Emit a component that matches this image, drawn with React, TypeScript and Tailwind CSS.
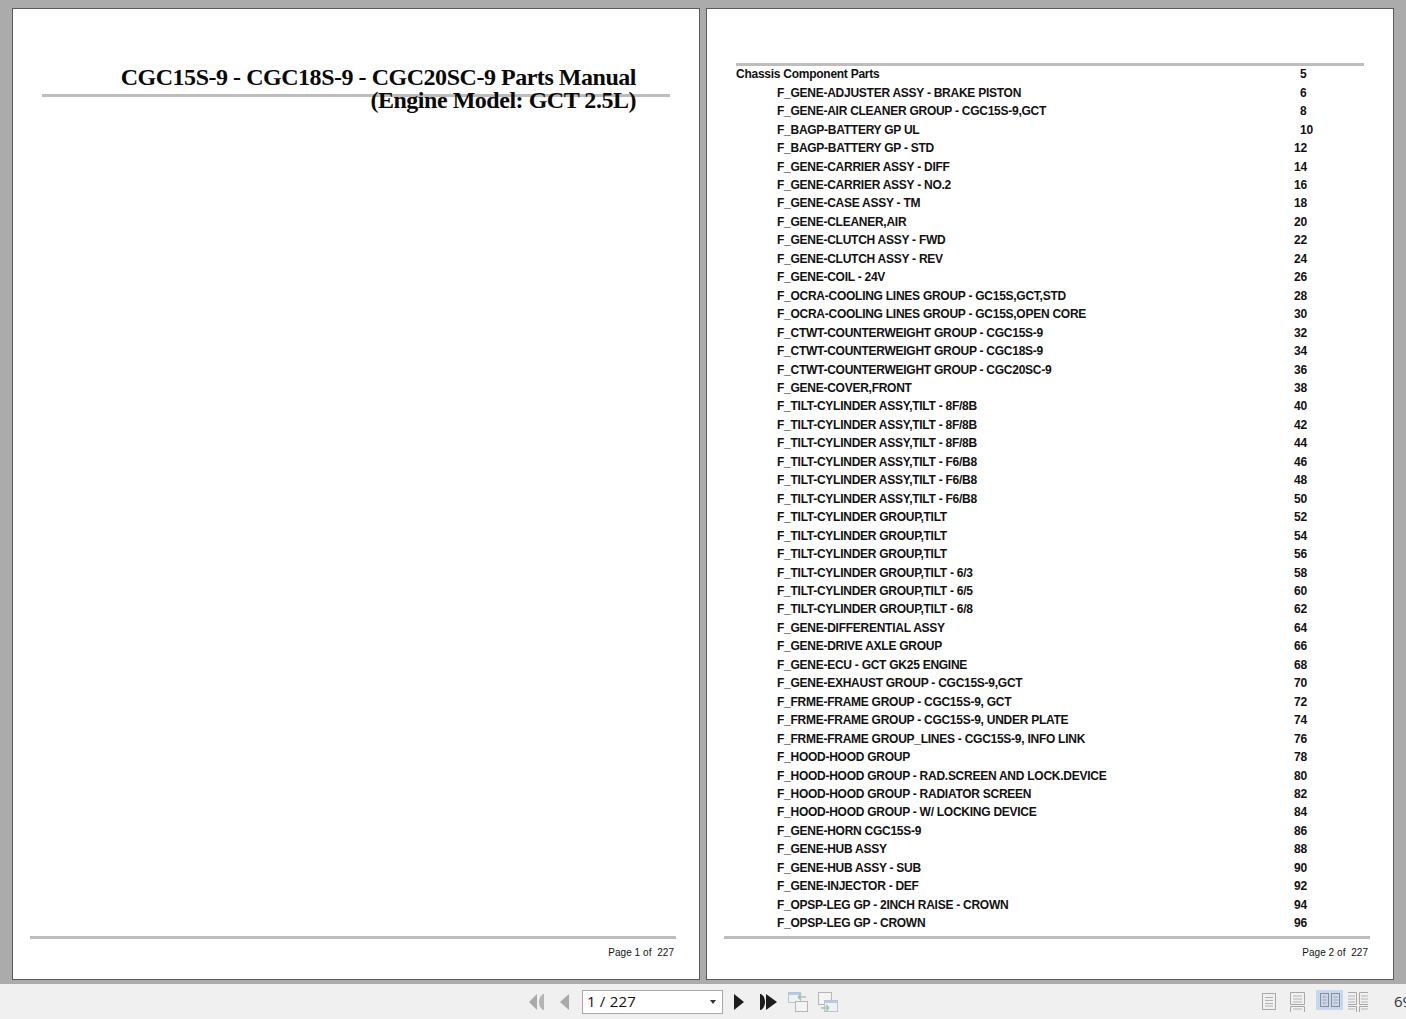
const rows: [string, string][] = [
  ["F_GENE-ADJUSTER ASSY - BRAKE PISTON", "6"],
  ["F_GENE-AIR CLEANER GROUP - CGC15S-9,GCT", "8"],
  ["F_BAGP-BATTERY GP UL", "10"],
  ["F_BAGP-BATTERY GP - STD", "12"],
  ["F_GENE-CARRIER ASSY - DIFF", "14"],
  ["F_GENE-CARRIER ASSY - NO.2", "16"],
  ["F_GENE-CASE ASSY - TM", "18"],
  ["F_GENE-CLEANER,AIR", "20"],
  ["F_GENE-CLUTCH ASSY - FWD", "22"],
  ["F_GENE-CLUTCH ASSY - REV", "24"],
  ["F_GENE-COIL - 24V", "26"],
  ["F_OCRA-COOLING LINES GROUP - GC15S,GCT,STD", "28"],
  ["F_OCRA-COOLING LINES GROUP - GC15S,OPEN CORE", "30"],
  ["F_CTWT-COUNTERWEIGHT GROUP - CGC15S-9", "32"],
  ["F_CTWT-COUNTERWEIGHT GROUP - CGC18S-9", "34"],
  ["F_CTWT-COUNTERWEIGHT GROUP - CGC20SC-9", "36"],
  ["F_GENE-COVER,FRONT", "38"],
  ["F_TILT-CYLINDER ASSY,TILT - 8F/8B", "40"],
  ["F_TILT-CYLINDER ASSY,TILT - 8F/8B", "42"],
  ["F_TILT-CYLINDER ASSY,TILT - 8F/8B", "44"],
  ["F_TILT-CYLINDER ASSY,TILT - F6/B8", "46"],
  ["F_TILT-CYLINDER ASSY,TILT - F6/B8", "48"],
  ["F_TILT-CYLINDER ASSY,TILT - F6/B8", "50"],
  ["F_TILT-CYLINDER GROUP,TILT", "52"],
  ["F_TILT-CYLINDER GROUP,TILT", "54"],
  ["F_TILT-CYLINDER GROUP,TILT", "56"],
  ["F_TILT-CYLINDER GROUP,TILT - 6/3", "58"],
  ["F_TILT-CYLINDER GROUP,TILT - 6/5", "60"],
  ["F_TILT-CYLINDER GROUP,TILT - 6/8", "62"],
  ["F_GENE-DIFFERENTIAL ASSY", "64"],
  ["F_GENE-DRIVE AXLE GROUP", "66"],
  ["F_GENE-ECU - GCT GK25 ENGINE", "68"],
  ["F_GENE-EXHAUST GROUP - CGC15S-9,GCT", "70"],
  ["F_FRME-FRAME GROUP - CGC15S-9, GCT", "72"],
  ["F_FRME-FRAME GROUP - CGC15S-9, UNDER PLATE", "74"],
  ["F_FRME-FRAME GROUP_LINES - CGC15S-9, INFO LINK", "76"],
  ["F_HOOD-HOOD GROUP", "78"],
  ["F_HOOD-HOOD GROUP - RAD.SCREEN AND LOCK.DEVICE", "80"],
  ["F_HOOD-HOOD GROUP - RADIATOR SCREEN", "82"],
  ["F_HOOD-HOOD GROUP - W/ LOCKING DEVICE", "84"],
  ["F_GENE-HORN CGC15S-9", "86"],
  ["F_GENE-HUB ASSY", "88"],
  ["F_GENE-HUB ASSY - SUB", "90"],
  ["F_GENE-INJECTOR - DEF", "92"],
  ["F_OPSP-LEG GP - 2INCH RAISE - CROWN", "94"],
  ["F_OPSP-LEG GP - CROWN", "96"],
];

function Footer({ page }: { page: number }) {
  return (
    <div className="ml-[17px] mr-[23px] mt-auto mb-[20px]">
      <div className="h-[3px] bg-[#bdbdbd]" />
      <div className="mt-[8px] pr-[2px] text-right text-[10px] leading-[12px] tracking-[0.05px] text-[#111] whitespace-pre">
        {`Page ${page} of  227`}
      </div>
    </div>
  );
}

function NavIcons() {
  return (
    <div className="flex items-center">
      <svg width="18" height="18" viewBox="0 0 18 18" className="ml-[528px]">
        <path d="M9 1v16L1 9z" fill="#a9a9a9" />
        <path d="M15 1c-3 2-4 5-4 8s1 6 4 8h1V1z" fill="#b4b4b4" />
      </svg>
      <svg width="11" height="18" viewBox="0 0 11 18" className="ml-[13px]">
        <path d="M10 1v16L1 9z" fill="#a9a9a9" />
      </svg>
      <div className="ml-[12px] flex h-[24px] w-[141px] items-center justify-between border border-[#a8a8a8] bg-white pl-[4px] pr-[6px] text-[15px] tracking-[0.2px] text-[#111] [font-family:'Open_Sans',sans-serif]">
        <span>1 / 227</span>
        <span className="h-0 w-0 border-x-[3px] border-t-[4px] border-x-transparent border-t-[#333]" />
      </div>
      <svg width="10" height="18" viewBox="0 0 10 18" className="ml-[11px]">
        <path d="M0 1v16L10 9z" fill="#1c1c1c" />
      </svg>
      <svg width="18" height="18" viewBox="0 0 18 18" className="ml-[16px]">
        <path d="M0 1h1c3 2 4 5 4 8s-1 6-4 8H0z" fill="#1c1c1c" />
        <path d="M6 1v16L17 9z" fill="#1c1c1c" />
      </svg>
      <svg width="20" height="20" viewBox="0 0 20 20" fill="none" className="ml-[10px]">
        <rect x="0.5" y="0.5" width="12" height="10" fill="#eef1f5" stroke="#b8c4d4" />
        <rect x="1" y="1" width="11" height="2" fill="#b9cbe4" />
        <rect x="7.5" y="9.5" width="12" height="10" fill="#f4f4f4" stroke="#b5b5b5" />
        <path d="M10 5h8M10 5l3-3M10 5l3 3" stroke="#9fc5b0" strokeWidth="1.5" />
      </svg>
      <svg width="20" height="20" viewBox="0 0 20 20" fill="none" className="ml-[10px]">
        <rect x="0.5" y="0.5" width="13" height="12" fill="#f4f4f4" stroke="#b5b5b5" />
        <rect x="6.5" y="8.5" width="13" height="11" fill="#eef1f5" stroke="#b8c4d4" />
        <rect x="7" y="9" width="12" height="2" fill="#b9cbe4" />
        <path d="M3 16h8M11 16l-3-3M11 16l-3 3" stroke="#9fc5b0" strokeWidth="1.5" />
      </svg>
    </div>
  );
}

function ViewIcons() {
  return (
    <div className="ml-auto flex items-center">
      <svg width="14" height="17" viewBox="0 0 14 17" fill="none">
        <rect x="0.5" y="0.5" width="13" height="16" stroke="#a8a8a8" />
        <path d="M3 4.5h8M3 7.5h8M3 10.5h8M3 13h8" stroke="#b4b4b4" />
      </svg>
      <svg width="15" height="20" viewBox="0 0 15 20" fill="none" className="ml-[14px]">
        <path d="M0.5 12.5V0.5h14v12z" stroke="#a8a8a8" />
        <path d="M3 4h9M3 7h9M3 10h9" stroke="#b4b4b4" />
        <path d="M0.5 20v-5.5h14V20" stroke="#a8a8a8" />
        <path d="M3 17h9" stroke="#b4b4b4" />
      </svg>
      <div className="mb-[3px] ml-[11px] flex h-[20px] w-[27px] items-center justify-center bg-[#c6d8f0]">
        <svg width="20" height="14" viewBox="0 0 20 14" fill="none">
          <rect x="0.5" y="0.5" width="8" height="13" stroke="#8d8d8d" />
          <rect x="11.5" y="0.5" width="8" height="13" stroke="#8d8d8d" />
          <path d="M2.5 4h4M2.5 7h4M2.5 10h4M13.5 4h4M13.5 7h4M13.5 10h4" stroke="#a0a0a0" />
        </svg>
      </div>
      <svg width="20" height="20" viewBox="0 0 20 20" fill="none" className="ml-[5px]">
        <path d="M0 0.5h8.5V12.5H0M20 0.5h-8.5V12.5H20M0 14.5h8.5V20M20 14.5h-8.5V20" stroke="#a8a8a8" />
        <path d="M0 4h7M0 7h7M0 10h7M13 4h7M13 7h7M13 10h7M0 17h7M13 17h7" stroke="#b4b4b4" />
      </svg>
      <span className="ml-[26px] w-[12px] overflow-hidden text-[15px] whitespace-nowrap text-[#333] [font-family:'Open_Sans',sans-serif]">69%</span>
    </div>
  );
}

export default function App() {
  return (
    <div
      className="flex h-[1019px] w-[1406px] flex-col overflow-hidden bg-[#ababab]"
      style={{ fontFamily: '"Liberation Sans", Arial, sans-serif' }}
    >
      <div className="mt-[8px] flex h-[972px] gap-[6px] pl-[12px]">
        {/* first page */}
        <div className="relative flex h-full w-[688px] flex-col border border-[#5a5a5a] bg-white">
          <div className="ml-[29px] mr-[29px] mt-[85px] h-[3px] bg-[#bdbdbd]" />
          <h1 className="absolute right-[63px] top-[57px] text-right text-[24px] font-bold leading-[23px] tracking-[-0.47px] text-[#0a0a0a] [font-family:'Liberation_Serif',serif]">
            CGC15S-9 - CGC18S-9 - CGC20SC-9 Parts Manual
            <br />
            (Engine Model: GCT 2.5L)
          </h1>
          <Footer page={1} />
        </div>

        {/* table of contents */}
        <div className="flex h-full w-[688px] flex-col border border-[#5a5a5a] bg-white">
          <div className="ml-[29px] mr-[29px] mt-[54px] h-[3px] bg-[#bdbdbd]" />
          <div className="ml-[29px] mr-[29px] mt-[-0.7px] text-[12px] font-bold leading-[18.457px] tracking-[-0.26px] text-[#111]">
            <div className="flex">
              <span className="w-[557px]">Chassis Component Parts</span>
              <span className="pl-[7px]">5</span>
            </div>
            {rows.map(([name, page], i) => (
              <div key={i} className="flex">
                <span className="ml-[41px] w-[510px] whitespace-nowrap">{name}</span>
                <span className={page.length === 1 || page === "10" ? "pl-[13px]" : "pl-[7px]"}>{page}</span>
              </div>
            ))}
          </div>
          <Footer page={2} />
        </div>
      </div>

      {/* toolbar */}
      <div className="mt-[4px] flex h-[35px] items-center bg-[#f0f0f0]">
        <NavIcons />
        <ViewIcons />
      </div>
    </div>
  );
}
